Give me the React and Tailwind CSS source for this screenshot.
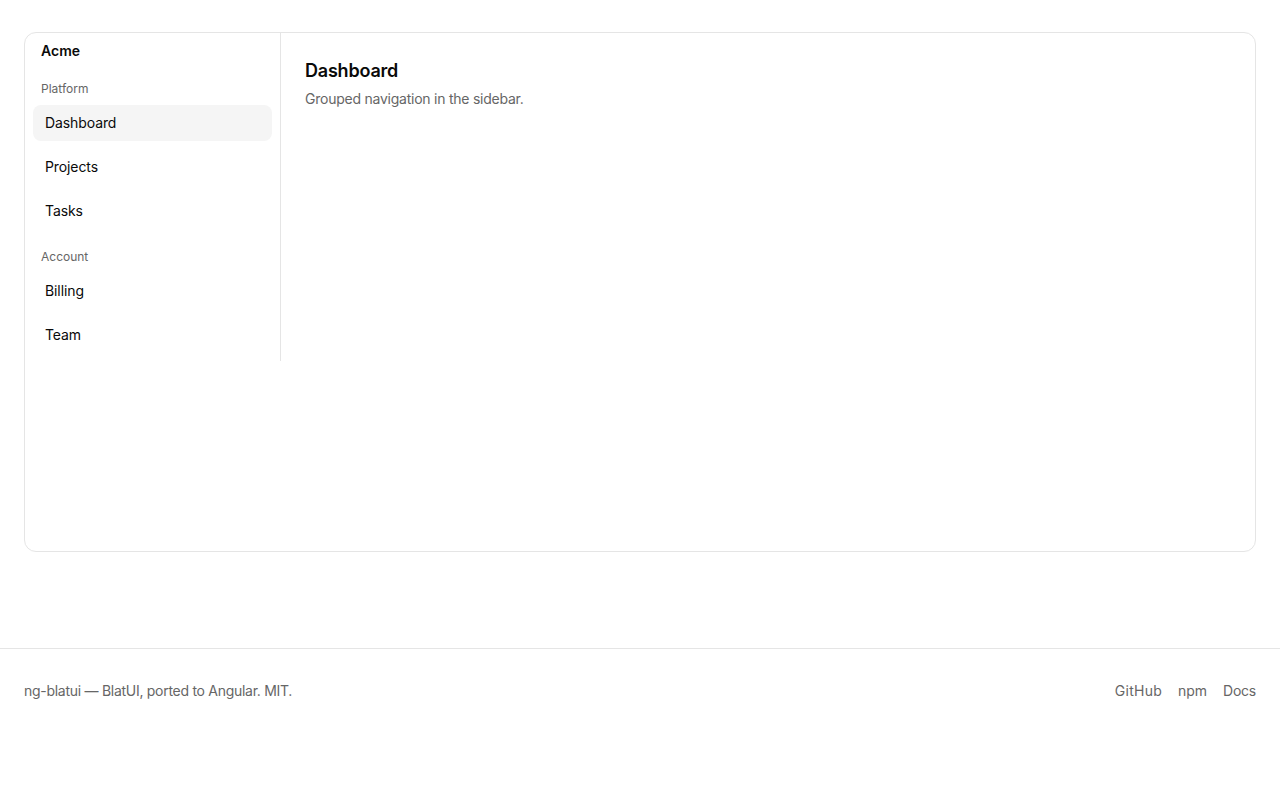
import React from "react";

const groups = [
  { label: "Platform", items: ["Dashboard", "Projects", "Tasks"] },
  { label: "Account", items: ["Billing", "Team"] },
];

const App = () => {
  return (
    <div className="min-h-screen bg-white text-[#0a0a0a] font-['Inter',sans-serif]">
      <main className="px-6 pt-8 h-[648px]">
        <div className="h-[520px] rounded-xl border border-[#e5e5e5] flex items-start overflow-hidden">
          {/* Sidebar */}
          <aside className="w-[256px] shrink-0 border-r border-[#e5e5e5] px-2 pb-2">
            <div className="px-2 pt-2 text-sm font-semibold leading-5">Acme</div>
            <div className="flex flex-col gap-4 mt-4">
              {groups.map((group) => (
                <div key={group.label}>
                  <div className="px-2 h-6 flex items-center text-xs text-[#666666]">{group.label}</div>
                  <div className="flex flex-col gap-2 mt-1">
                    {group.items.map((item) => (
                      <div
                        key={item}
                        className={`h-9 px-3 flex items-center rounded-lg text-sm tracking-[-0.1px] ${
                          item === "Dashboard" ? "bg-[#f5f5f5]" : ""
                        }`}
                      >
                        {item}
                      </div>
                    ))}
                  </div>
                </div>
              ))}
            </div>
          </aside>
          {/* Content */}
          <section className="flex-1 p-6">
            <h1 className="text-lg font-semibold leading-7 tracking-[-0.2px]">Dashboard</h1>
            <p className="mt-1 text-sm tracking-[-0.24px] text-[#666666]">Grouped navigation in the sidebar.</p>
          </section>
        </div>
      </main>
      <footer className="border-t border-[#e5e5e5] px-6 py-8 flex items-center justify-between text-sm text-[#666666]">
        <span className="tracking-[-0.28px]">ng-blatui — BlatUI, ported to Angular. MIT.</span>
        <div className="flex gap-4">
          <span className="tracking-[0.25px]">GitHub</span>
          <span>npm</span>
          <span className="tracking-[-0.25px]">Docs</span>
        </div>
      </footer>
    </div>
  );
};

export default App;
